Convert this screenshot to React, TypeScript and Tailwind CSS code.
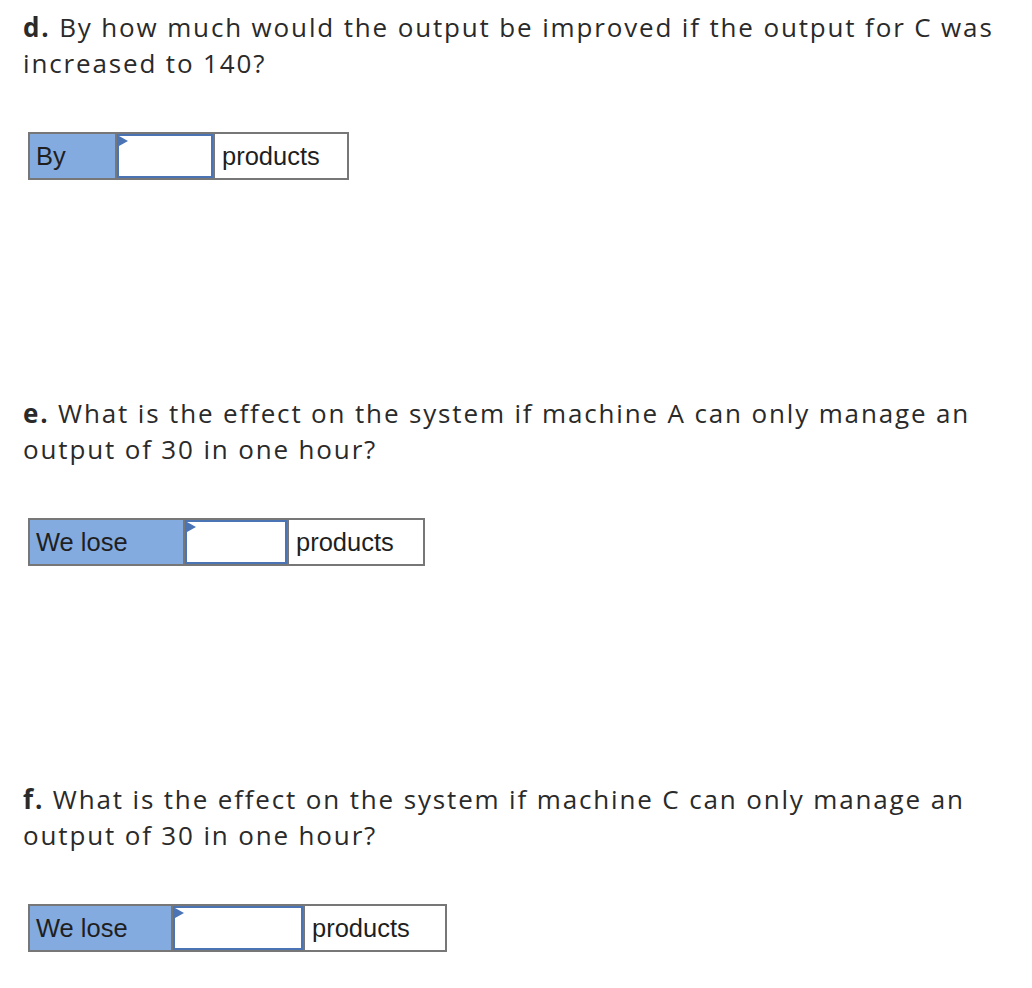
import React from "react";

type Row = {
  lines: [string, string];
  letter: string;
  label: string;
  labelW: number;
  inputW: number;
  prodW: number;
};

const rows: Row[] = [
  {
    letter: "d.",
    lines: [" By how much would the output be improved if the output for C was", "increased to 140?"],
    label: "By",
    labelW: 87,
    inputW: 96,
    prodW: 134,
  },
  {
    letter: "e.",
    lines: [" What is the effect on the system if machine A can only manage an", "output of 30 in one hour?"],
    label: "We lose",
    labelW: 155,
    inputW: 102,
    prodW: 136,
  },
  {
    letter: "f.",
    lines: [" What is the effect on the system if machine C can only manage an", "output of 30 in one hour?"],
    label: "We lose",
    labelW: 143,
    inputW: 130,
    prodW: 142,
  },
];

function Section({ row }: { row: Row }) {
  return (
    <div className="h-[386px]">
      <p className="text-[26px] leading-[36px] tracking-[1.85px] text-[#2a2a2a] font-['Open_Sans',sans-serif]">
        <span className="font-bold">{row.letter}</span>
        {row.lines[0]}
        <br />
        {row.lines[1]}
      </p>
      <div className="mt-[51px] ml-[5px] inline-flex h-[48px] border-2 border-[#777777] bg-white font-['Liberation_Sans',Arial,sans-serif] text-[25.5px] text-[#1f1f1f]">
        <div
          className="flex items-center bg-[#83abe0] pl-[6px] border-r-2 border-[#777777]"
          style={{ width: row.labelW }}
        >
          {row.label}
        </div>
        <div
          className="relative border-2 border-[#4a74b4] bg-white"
          style={{ width: row.inputW }}
        >
          <svg
            className="absolute left-0 top-0"
            width="10"
            height="11"
            viewBox="0 0 10 11"
          >
            <polygon points="0,0 9,5 0,10" fill="#4a74b4" />
          </svg>
        </div>
        <div
          className="flex items-center pl-[7px] border-l-2 border-[#777777]"
          style={{ width: row.prodW }}
        >
          products
        </div>
      </div>
    </div>
  );
}

export default function App() {
  return (
    <div className="w-[1032px] h-[988px] bg-white pl-[23px] pt-[9px] overflow-hidden">
      {rows.map((r) => (
        <Section key={r.letter} row={r} />
      ))}
    </div>
  );
}
